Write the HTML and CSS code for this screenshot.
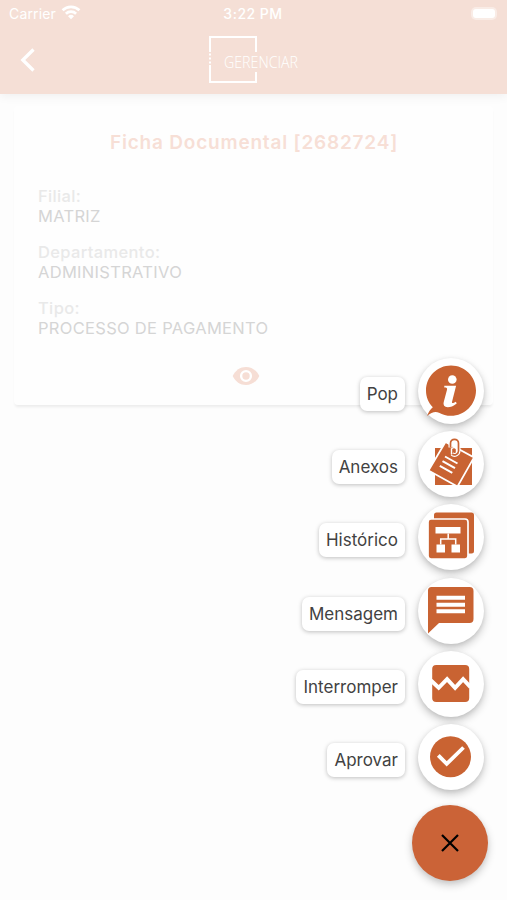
FILE: index.html
```html
<!DOCTYPE html>
<html lang="pt-BR">
<head>
<meta charset="utf-8">
<title>Ficha Documental</title>
<link rel="stylesheet" href="styles.css">
</head>
<body>
<header class="header">
  <div class="status">
    <div class="carrier"><span>Carrier</span>
      <svg width="20" height="15" viewBox="0 0 20 15"><g fill="none" stroke="#fff" stroke-width="2.7"><path d="M1.6 5.3a12 12 0 0 1 16.8 0"/><path d="M4.9 8.8a7.3 7.3 0 0 1 10.2 0"/></g><path d="M10 14.2l-3-3a4.3 4.3 0 0 1 6 0z" fill="#fff"/></svg>
    </div>
    <div class="time">3:22 PM</div>
    <div class="battery"><i></i></div>
  </div>
  <div class="nav">
    <svg class="back" width="18" height="26" viewBox="0 0 18 26"><path d="M15.500 2.500L4.800 13l10.700 10.500" fill="none" stroke="#fff" stroke-width="3.3"/></svg>
    <svg class="logo" width="100" height="50" viewBox="0 0 100 50"><g fill="none" stroke="#fff" stroke-width="2"><path d="M2 17V2h46v15M2 30v17h46V37"/><path d="M2 18.500v2M2 22.500v2M2 26.500v2"/></g><text x="16" y="32.500" textLength="74" lengthAdjust="spacingAndGlyphs">GERENCIAR</text></svg>
  </div>
</header>
<main class="card">
  <h1>Ficha Documental [2682724]</h1>
  <dl>
    <dt>Filial:</dt><dd>MATRIZ</dd>
    <dt>Departamento:</dt><dd>ADMINISTRATIVO</dd>
    <dt>Tipo:</dt><dd>PROCESSO DE PAGAMENTO</dd>
  </dl>
  <svg class="eye" width="28" height="20" viewBox="0 0 28 20"><path d="M.7 10C3.3 4.300 8.300 1 14 1s10.700 3.300 13.300 9C24.700 15.700 19.700 19 14 19S3.300 15.700.7 10z" fill="#f6ded5"/><circle cx="14" cy="10" r="4.900" fill="none" stroke="#fff" stroke-width="2.400"/></svg>
</main>
<nav class="dial">
  <div class="action"><span class="label">Pop</span><button class="mini">
    <svg viewBox="0.5 0.5 66 66"><path d="M33.500 8C47.300 8 58.500 19 58.500 33S47.300 58.300 33.500 58.300c-4.500 0-8.500-1.200-12-3.100-4-1.700-7.500-.2-12 3.300 1.300-3.800 3.300-6.600 5.800-8.800C11 45.300 8.500 39.500 8.500 33 8.500 19 19.700 8 33.500 8z"/><g fill="#fff"><circle cx="34.800" cy="22" r="4.300"/><path d="M26.800 28.200h11.800l-4 15.700c-.5 2 .6 2.200 3.800.4l.8 1.600c-3.500 2.900-6.100 3.800-8.900 3.800-3.400 0-4.900-2.200-4-5.400l3.200-12c.4-1.600-.2-2.200-2.700-2.200z"/></g></svg></button></div>
  <div class="action"><span class="label">Anexos</span><button class="mini">
    <svg viewBox="0.5 0.5 66 66"><path d="M17.500 17.500h37V54.500h-37z"/><path d="M28 11.500l28.500 15.400L40 56 11 40z" stroke="#fff" stroke-width="1.700"/><path d="M27.500 26l12.500 7M25 30.700l12.500 7M22.300 35.400l12.500 7" fill="none" stroke="#fff" stroke-width="2"/><path d="M33 17v-4.200a4 4 0 0 1 8 0V20.500a4 4 0 0 1-6.500 3" fill="none" stroke="#fff" stroke-width="4"/><path d="M33 17v-4.200a4 4 0 0 1 8 0V20.500a4 4 0 0 1-6.500 3" fill="none" stroke="#c96332" stroke-width="1.700"/><path d="M34 24v-5.500a3 3 0 0 1 5 0v3" fill="none" stroke="#fff" stroke-width="1.400"/></svg></button></div>
  <div class="action"><span class="label">Histórico</span><button class="mini">
    <svg viewBox="0.5 0.5 66 66"><path d="M19 9h35q2.500 0 2.500 2.500v36q0 2.500-2.500 2.500h-4V16H16.500v-4.500Q16.500 9 19 9z"/><rect x="10.500" y="15.500" width="40" height="40" rx="3" stroke="#fff" stroke-width="1.700"/><g fill="#fff"><path d="M18 23.500h25v6.500H18zM19 41h8.500v8H19zM34 41h8.500v8H34z"/></g><path d="M30.700 30v5.500M23.200 41v-5.500h15V41" fill="none" stroke="#fff" stroke-width="1.500"/></svg></button></div>
  <div class="action"><span class="label">Mensagem</span><button class="mini">
    <svg viewBox="0.5 0.5 66 66"><path d="M14 9.500h38q4 0 4 4v28q0 4-4 4H21.500L10.500 56V13q0-3.500 3.500-3.500z"/><path d="M19 20.200h28.500M19 27.200h28.500M19 33.800h28.500" fill="none" stroke="#fff" stroke-width="4"/></svg></button></div>
  <div class="action"><span class="label">Interromper</span><button class="mini">
    <svg viewBox="0.5 0.5 66 66"><rect x="14.700" y="14.500" width="37" height="37" rx="4"/><path d="M13.500 30l7.700 7.300 8.400-8.600 8 8.600 8-8.600 7.400 8" fill="none" stroke="#fff" stroke-width="4"/></svg></button></div>
  <div class="action"><span class="label">Aprovar</span><button class="mini">
    <svg viewBox="0.5 0.5 66 66"><circle cx="33" cy="33.300" r="20.500"/><path d="M20.800 31.800l8.400 8.600L46 24" fill="none" stroke="#fff" stroke-width="3.800"/></svg></button></div>
  <button class="fab"><svg width="20" height="20" viewBox="0 0 20 20"><path d="M2 2l16 16M18 2L2 18" stroke="#000" stroke-width="2.200"/></svg></button>
</nav>
</body>
</html>
```

FILE: styles.css
```css
* { box-sizing: border-box; }
body {
  margin: 0;
  height: 900px;
  overflow: hidden;
  background: #fdfdfd;
  font-family: Inter, "Liberation Sans", sans-serif;
  position: relative;
}
svg { display: block; }
.header {
  height: 94px;
  background: #f5dfd6;
  box-shadow: 0 2px 10px rgba(0, 0, 0, .06);
  color: #fff;
}
.status {
  height: 27px;
  display: grid;
  grid-template-columns: 1fr auto 1fr;
  align-items: center;
  padding: 0 10px 0 9px;
  font-size: 14px;
}
.carrier { display: flex; align-items: center; gap: 5px; letter-spacing: .15px; }
.carrier svg { margin-top: -2px; }
.time { font-weight: 500; letter-spacing: .5px; }
.battery {
  justify-self: end;
  width: 26px;
  height: 13px;
  padding: 2px;
  border-radius: 5px;
  background: rgba(255, 255, 255, .4);
}
.battery i { display: block; height: 9px; border-radius: 3px; background: #fff; }
.nav { height: 67px; display: flex; align-items: flex-start; padding: 8px 0 0 18px; }
.back { margin-top: 12px; }
.logo { margin-left: 172px; overflow: visible; }
.logo text { font: 300 16px "Open Sans", "Noto Sans", sans-serif; fill: #fff; }
.card {
  margin: 12px 14px 0;
  height: 299px;
  padding: 25px 23px 0 24px;
  border-radius: 4px;
  background: #fefefe;
  box-shadow: 0 3px 3px -1px rgba(0, 0, 0, .07);
}
h1 {
  margin: 0 0 31px;
  text-align: center;
  font-size: 19px;
  line-height: 24px;
  font-weight: 600;
  letter-spacing: .8px;
  color: #f7dfd6;
  white-space: nowrap;
}
dl { margin: 0; font-size: 16.500px; line-height: 20px; letter-spacing: .3px; }
dt { color: #e9e9e9; font-weight: 500; letter-spacing: .35px; }
dd { margin: 0 0 16px; color: #d5d5d5; }
.eye { margin: 28px 0 0 194px; }
.dial {
  position: absolute;
  right: 19.500px;
  bottom: 19.300px;
  display: flex;
  flex-direction: column;
  align-items: flex-end;
  gap: 7.330px;
}
.action { display: flex; align-items: center; gap: 13px; margin-right: 3.500px; }
.label {
  height: 34px;
  margin-top: 6px;
  padding: 0 7px;
  border-radius: 7px;
  background: #fff;
  box-shadow: 0 1px 4px rgba(0, 0, 0, .25);
  color: #424242;
  font-size: 17px;
  line-height: 35px;
}
button { border: 0; padding: 0; border-radius: 50%; }
.mini {
  width: 66px;
  height: 66px;
  background: #fff;
  box-shadow: 0 4px 8px rgba(0, 0, 0, .22), 0 1px 4px rgba(0, 0, 0, .08);
}
.mini svg { width: 66px; height: 66px; fill: #c96332; }
.fab {
  width: 76px;
  height: 76px;
  margin-top: 7px;
  display: flex;
  align-items: center;
  justify-content: center;
  background: #cb6337;
  box-shadow: 0 4px 8px rgba(0, 0, 0, .2), 0 1px 5px rgba(0, 0, 0, .06);
}
```
